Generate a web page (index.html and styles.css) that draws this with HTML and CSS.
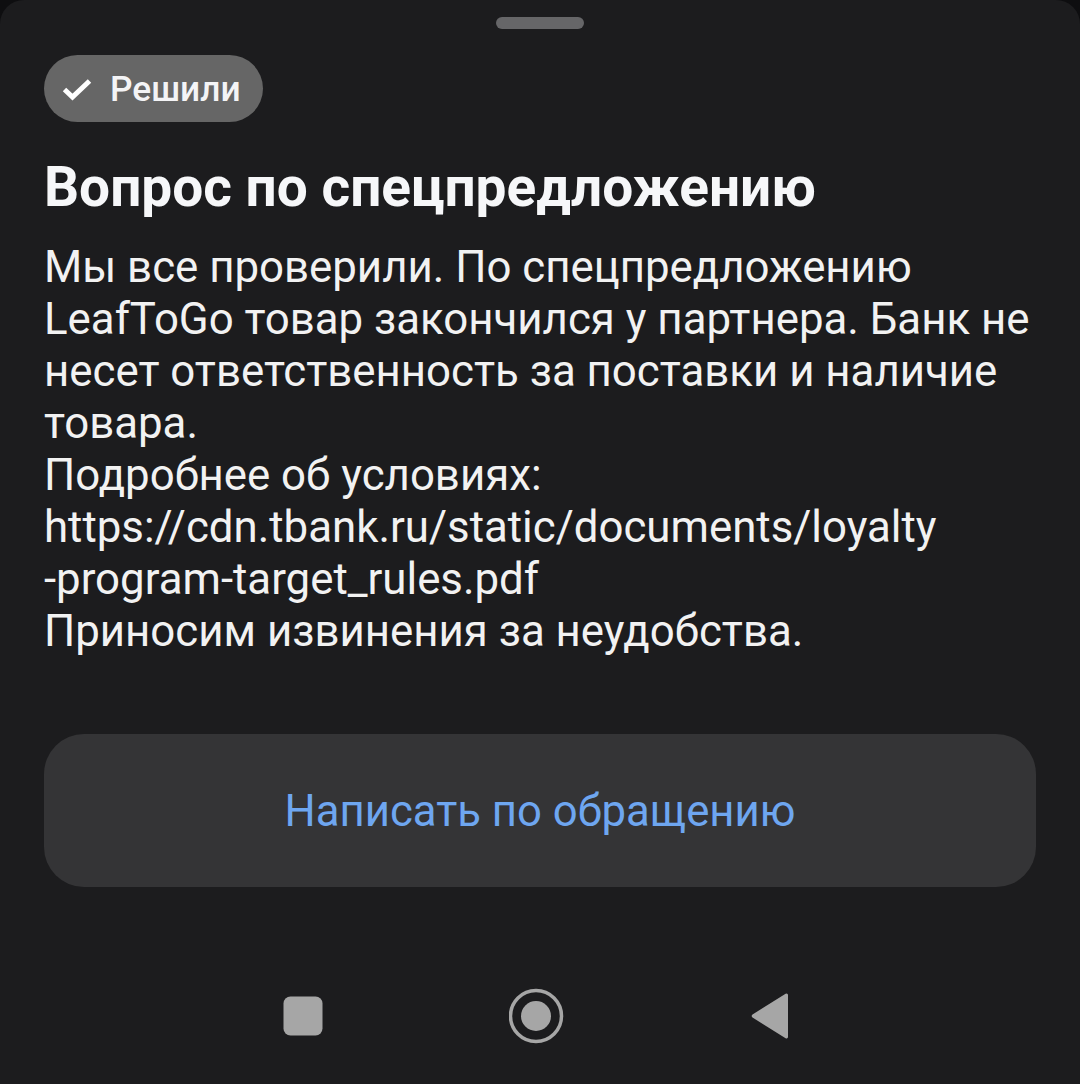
FILE: index.html
```html
<!DOCTYPE html>
<html lang="ru">
<head>
    <meta charset="UTF-8">
    <meta name="viewport" content="width=device-width, initial-scale=1.0">
    <title>Обращение</title>
    <link rel="stylesheet" href="styles.css">
</head>
<body>
    <div class="sheet">
        <div class="handle"></div>

        <div class="badge">
            <svg class="badge-icon" width="30" height="24" viewBox="0 0 30 24">
                <path d="M2.500 12.500l8 7.500L27.500 4" fill="none" stroke="#fff" stroke-width="5"/>
            </svg>
            <span>Решили</span>
        </div>

        <h1>Вопрос по спецпредложению</h1>

        <p class="message">Мы все проверили. По спецпредложению<br>LeafToGo товар закончился у партнера. Банк не<br>несет ответственность за поставки и наличие<br>товара.<br>Подробнее об условиях:<br>https://cdn.tbank.ru/static/documents/loyalty<br>-program-target_rules.pdf<br>Приносим извинения за неудобства.</p>

        <button class="reply-button">Написать по обращению</button>
    </div>

    <!-- Android nav bar -->
    <div class="nav-bar">
        <svg width="40" height="40" viewBox="0 0 40 40">
            <rect x="0.500" y="0.500" width="39" height="39" rx="7" fill="#a6a6a6"/>
        </svg>
        <svg width="56" height="56" viewBox="0 0 56 56">
            <circle cx="27" cy="28" r="25.500" fill="none" stroke="#a6a6a6" stroke-width="3.500"/>
            <circle cx="27" cy="28" r="15" fill="#a6a6a6"/>
        </svg>
        <svg width="38" height="48" viewBox="0 0 38 48">
            <path d="M37 3v42a1.500 1.500 0 0 1-2.400 1.200L1.500 25.500a2 2 0 0 1 0-3L34.600 1.800A1.500 1.500 0 0 1 37 3z" fill="#a6a6a6"/>
        </svg>
    </div>
</body>
</html>
```

FILE: styles.css
```css
body {
    margin: 0;
    height: 1084px;
    overflow: hidden;
    background-color: #0e0e10;
    font-family: Roboto, "Noto Sans", sans-serif;
    color: #fff;
}
.sheet {
    height: 1084px;
    box-sizing: border-box;
    padding: 17px 44px 0 44px;
    border-radius: 24px 24px 0 0;
    background-color: #1c1c1e;
}
.handle {
    width: 88px;
    height: 12px;
    margin: 0 auto;
    border-radius: 6px;
    background-color: #666668;
}
.badge {
    display: inline-flex;
    align-items: center;
    gap: 18px;
    height: 67px;
    margin-top: 26px;
    padding: 0 22px 0 18px;
    border-radius: 34px;
    background-color: #666666;
    font-size: 35.300px;
    font-weight: 500;
    color: #f4f4f6;
}
h1 {
    margin: 32px 0 0 0;
    font-size: 55px;
    line-height: 66px;
    font-weight: 700;
    color: #f6f7f9;
}
.message {
    margin: 21px 0 0 0;
    font-size: 43.800px;
    line-height: 52px;
    color: #f2f2f2;
    white-space: nowrap;
}
.reply-button {
    display: block;
    width: 100%;
    height: 153px;
    margin-top: 77px;
    padding-top: 2px;
    border: none;
    border-radius: 40px;
    background-color: #343436;
    font-family: inherit;
    font-size: 43.700px;
    color: #6ea6f0;
}
.nav-bar {
    position: absolute;
    left: 283px;
    top: 988px;
    width: 506px;
    height: 56px;
    display: flex;
    justify-content: space-between;
    align-items: center;
}
```
